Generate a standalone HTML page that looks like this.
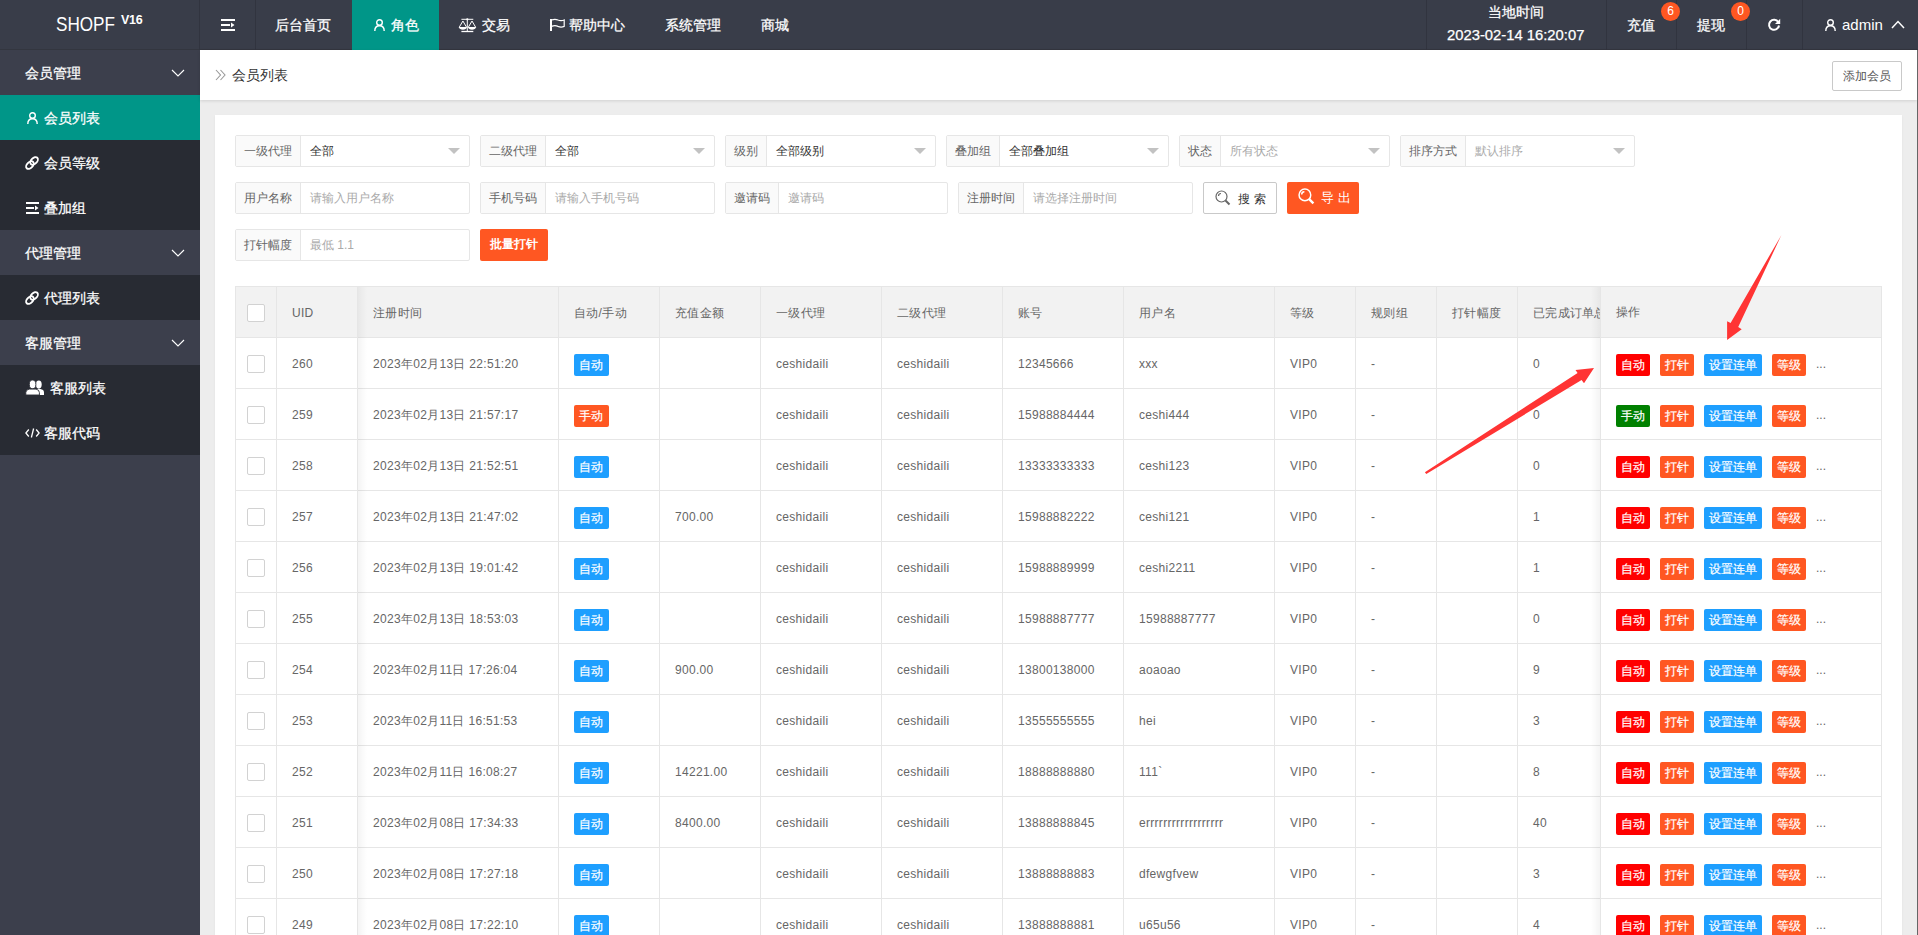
<!DOCTYPE html><html><head><meta charset="utf-8"><style>
*{box-sizing:border-box;margin:0;padding:0}
html,body{width:1918px;height:935px;overflow:hidden;background:#ededed;font-family:"Liberation Sans",sans-serif;color:#666}
.ab{position:absolute;white-space:nowrap}
.w14{color:#fff;font-size:14px;line-height:16px;-webkit-text-stroke:0.25px #fff}
.vl{position:absolute;top:0;width:1px;height:50px;background:#31343f}
.fi{position:absolute;height:32px;border:1px solid #e6e6e6;border-radius:2px;background:#fff;font-size:12px}
.fi .lb{position:absolute;left:0;top:0;height:30px;background:#fafafa;border-right:1px solid #e6e6e6;color:#666;line-height:30px;padding-left:8px;white-space:nowrap}
.fi .v{position:absolute;top:0;line-height:30px;color:#333;white-space:nowrap}
.fi .ph{color:#aaa}
.fi .arr{position:absolute;right:9px;top:12px;width:0;height:0;border-left:6px solid transparent;border-right:6px solid transparent;border-top:6px solid #c2c2c2}
.btn{position:absolute;height:32px;border-radius:2px;font-size:12px;line-height:30px;text-align:center;white-space:nowrap}
.c{position:absolute;top:0;height:50px;border-right:1px solid #e6e6e6;line-height:52px;letter-spacing:0.3px;font-size:12px;color:#666;padding-left:15px;overflow:hidden;white-space:nowrap;background:#fff}
.hd .c{background:#f2f2f2}
.row{position:absolute;left:0;height:51px;border-bottom:1px solid #e6e6e6}
.cb{position:absolute;left:11px;top:17px;width:18px;height:18px;border:1px solid #d2d2d2;border-radius:2px;background:#fff}
.bg{position:absolute;top:16px;height:22px;line-height:22px;padding:0 5px;color:#fff;font-size:12px;border-radius:2px;white-space:nowrap;-webkit-text-stroke:0.2px #fff}
</style></head><body>
<div class="ab" style="left:0;top:0;width:1918px;height:50px;background:#393D49"></div>
<div class="ab" style="left:56px;top:13px;color:#fff;font-size:20px;line-height:22px;transform:scaleX(0.856);transform-origin:0 0">SHOPF</div>
<div class="ab" style="left:121px;top:13px;color:#fff;font-size:12.5px;line-height:14px;font-weight:bold;letter-spacing:-0.3px">V16</div>
<div class="ab" style="left:0;top:49px;width:1918px;height:1px;background:#33363f"></div>
<div class="vl" style="left:199px"></div>
<div class="vl" style="left:255px"></div>
<div class="vl" style="left:1426px"></div>
<div class="vl" style="left:1606px"></div>
<div class="vl" style="left:1676px"></div>
<div class="vl" style="left:1746px"></div>
<div class="vl" style="left:1802px"></div>
<svg class="ab" style="left:221px;top:19px" width="14" height="12" viewBox="0 0 14 12"><rect x="0" y="0" width="14" height="2" fill="#fff"/><rect x="0" y="5" width="9" height="2" fill="#fff"/><path d="M10 3.5 L13.5 6 L10 8.5Z" fill="#fff"/><rect x="0" y="10" width="14" height="2" fill="#fff"/></svg>
<div class="ab" style="left:352px;top:0;width:87px;height:50px;background:#009688"></div>
<div class="ab w14" style="left:275px;top:17px">后台首页</div>
<div class="ab w14" style="left:391px;top:17px">角色</div>
<div class="ab w14" style="left:482px;top:17px">交易</div>
<div class="ab w14" style="left:569px;top:17px">帮助中心</div>
<div class="ab w14" style="left:665px;top:17px">系统管理</div>
<div class="ab w14" style="left:761px;top:17px">商城</div>
<svg class="ab" style="left:374px;top:19px" width="11" height="12" viewBox="0 0 11 12"><circle cx="5.5" cy="3.5" r="2.8" fill="none" stroke="#fff" stroke-width="1.4"/><path d="M0.8 12 C0.8 8.5 2.8 6.8 5.5 6.8 C8.2 6.8 10.2 8.5 10.2 12" fill="none" stroke="#fff" stroke-width="1.4"/></svg>
<svg class="ab" style="left:458px;top:17px" width="20" height="16" viewBox="0 0 20 16"><g fill="none" stroke="#fff" stroke-width="1"><line x1="3.4" y1="2.3" x2="15.3" y2="2.3"/><line x1="9.3" y1="2.3" x2="9.3" y2="14.5"/><line x1="3.4" y1="14.5" x2="15.3" y2="14.5" stroke-width="1.3"/><path d="M4.9 4 L1.2 10.3 M4.9 4 L8.6 10.3"/><path d="M14 4 L10.3 10.3 M14 4 L17.7 10.3"/></g><g fill="#fff"><circle cx="9.3" cy="2.3" r="1.1"/><path d="M0.8 10 L9 10 Q8.3 12.8 4.9 12.8 Q1.5 12.8 0.8 10Z"/><path d="M9.9 10 L18.1 10 Q17.4 12.8 14 12.8 Q10.6 12.8 9.9 10Z"/></g></svg>
<svg class="ab" style="left:549px;top:18px" width="17" height="14" viewBox="0 0 17 14"><g fill="none" stroke="#fff"><line x1="2" y1="1" x2="2" y2="13" stroke-width="2"/><path d="M2.5 2 Q6 0.6 9 2 Q12 3.3 15.2 2 L15.2 8.4 Q12 9.7 9 8.4 Q6 7 2.5 8.4" stroke-width="1.2"/></g></svg>
<div class="ab w14" style="left:1488px;top:4px;font-size:14px">当地时间</div>
<div class="ab w14" style="left:1447px;top:27px;font-size:14.8px;line-height:17px">2023-02-14 16:20:07</div>
<div class="ab w14" style="left:1627px;top:17px">充值</div>
<div class="ab w14" style="left:1697px;top:17px">提现</div>
<div class="ab" style="left:1661px;top:2px;width:19px;height:19px;border-radius:50%;background:#FF5722;color:#fff;font-size:12px;line-height:19px;text-align:center">6</div>
<div class="ab" style="left:1731px;top:2px;width:19px;height:19px;border-radius:50%;background:#FF5722;color:#fff;font-size:12px;line-height:19px;text-align:center">0</div>
<svg class="ab" style="left:1767px;top:18px" width="14" height="14" viewBox="0 0 14 14"><path d="M11.3 4.2 A5 5 0 1 0 12 7.5" fill="none" stroke="#fff" stroke-width="2"/><path d="M13.2 0.8 L13.2 6 L8 6 Z" fill="#fff"/></svg>
<svg class="ab" style="left:1825px;top:19px" width="11" height="12" viewBox="0 0 11 12"><circle cx="5.5" cy="3.5" r="2.8" fill="none" stroke="#fff" stroke-width="1.4"/><path d="M0.8 12 C0.8 8.5 2.8 6.8 5.5 6.8 C8.2 6.8 10.2 8.5 10.2 12" fill="none" stroke="#fff" stroke-width="1.4"/></svg>
<div class="ab" style="left:1842px;top:16px;color:#fff;font-size:15px;line-height:17px">admin</div>
<svg class="ab" style="left:1891px;top:20px" width="14" height="9" viewBox="0 0 14 9"><path d="M1 8 L7 1.5 L13 8" fill="none" stroke="#fff" stroke-width="1.5"/></svg>
<div class="ab" style="left:0;top:50px;width:200px;height:885px;background:#3C3F4C"></div>
<div class="ab" style="left:0;top:140px;width:200px;height:90px;background:#282B33"></div>
<div class="ab" style="left:0;top:275px;width:200px;height:45px;background:#282B33"></div>
<div class="ab" style="left:0;top:365px;width:200px;height:90px;background:#282B33"></div>
<div class="ab" style="left:0;top:95px;width:200px;height:45px;background:#009688"></div>
<div class="ab w14" style="left:25px;top:65px">会员管理</div>
<svg class="ab" style="left:171px;top:69px" width="14" height="8" viewBox="0 0 14 8"><path d="M1 1 L7 7 L13 1" fill="none" stroke="#fff" stroke-width="1.1"/></svg>
<div class="ab w14" style="left:25px;top:245px">代理管理</div>
<svg class="ab" style="left:171px;top:249px" width="14" height="8" viewBox="0 0 14 8"><path d="M1 1 L7 7 L13 1" fill="none" stroke="#fff" stroke-width="1.1"/></svg>
<div class="ab w14" style="left:25px;top:335px">客服管理</div>
<svg class="ab" style="left:171px;top:339px" width="14" height="8" viewBox="0 0 14 8"><path d="M1 1 L7 7 L13 1" fill="none" stroke="#fff" stroke-width="1.1"/></svg>
<div class="ab w14" style="left:44px;top:110px">会员列表</div>
<div class="ab w14" style="left:44px;top:155px">会员等级</div>
<div class="ab w14" style="left:44px;top:200px">叠加组</div>
<div class="ab w14" style="left:44px;top:290px">代理列表</div>
<div class="ab w14" style="left:50px;top:380px">客服列表</div>
<div class="ab w14" style="left:44px;top:425px">客服代码</div>
<svg class="ab" style="left:27px;top:112px" width="11" height="12" viewBox="0 0 11 12"><circle cx="5.5" cy="3.5" r="2.8" fill="none" stroke="#fff" stroke-width="1.4"/><path d="M0.8 12 C0.8 8.5 2.8 6.8 5.5 6.8 C8.2 6.8 10.2 8.5 10.2 12" fill="none" stroke="#fff" stroke-width="1.4"/></svg>
<svg class="ab" style="left:24px;top:155px" width="16" height="16" viewBox="0 0 16 16"><g fill="none" stroke="#fff" stroke-width="1.9"><ellipse cx="10.1" cy="5.9" rx="4.5" ry="2.9" transform="rotate(-45 10.1 5.9)"/><ellipse cx="5.9" cy="10.1" rx="4.5" ry="2.9" transform="rotate(-45 5.9 10.1)"/></g></svg>
<svg class="ab" style="left:24px;top:290px" width="16" height="16" viewBox="0 0 16 16"><g fill="none" stroke="#fff" stroke-width="1.9"><ellipse cx="10.1" cy="5.9" rx="4.5" ry="2.9" transform="rotate(-45 10.1 5.9)"/><ellipse cx="5.9" cy="10.1" rx="4.5" ry="2.9" transform="rotate(-45 5.9 10.1)"/></g></svg>
<svg class="ab" style="left:26px;top:202px" width="13" height="12" viewBox="0 0 13 12"><rect x="0" y="0" width="13" height="2" fill="#fff"/><rect x="0" y="5" width="8" height="2" fill="#fff"/><path d="M9 3.5 L12.5 6 L9 8.5Z" fill="#fff"/><rect x="0" y="10" width="13" height="2" fill="#fff"/></svg>
<svg class="ab" style="left:25px;top:380px" width="20" height="15" viewBox="0 0 20 15"><g fill="#fff"><ellipse cx="13.8" cy="4.6" rx="2.9" ry="4.1"/><path d="M9.5 15 L9.5 12.2 Q9.5 9.6 12.2 9.1 L15.4 9.1 Q18.8 9.6 19 12.2 L19 15Z"/><ellipse cx="7.6" cy="4.4" rx="3.3" ry="4.4" stroke="#282B33" stroke-width="0.9"/><path d="M0.8 15 L0.8 12.5 Q1 9.6 4.2 9.1 L11 9.1 Q14.2 9.6 14.4 12.5 L14.4 15Z" stroke="#282B33" stroke-width="0.9"/></g></svg>
<svg class="ab" style="left:25px;top:428px" width="15" height="10" viewBox="0 0 15 10"><g fill="none" stroke="#fff" stroke-width="1.3"><path d="M3.8 1.5 L0.9 5 L3.8 8.5"/><path d="M11.2 1.5 L14.1 5 L11.2 8.5"/><line x1="8.6" y1="0.5" x2="6.4" y2="9.5"/></g></svg>
<div class="ab" style="left:200px;top:50px;width:1717px;height:50px;background:#fff;box-shadow:0 1px 3px rgba(0,0,0,.12)"></div>
<div class="ab" style="left:1917px;top:50px;width:1px;height:885px;background:#666"></div>
<svg class="ab" style="left:215px;top:69px" width="12" height="12" viewBox="0 0 12 12"><g fill="none" stroke="#999" stroke-width="1.1"><path d="M1 1 L5.5 6 L1 11"/><path d="M5.5 1 L10 6 L5.5 11"/></g></svg>
<div class="ab" style="left:232px;top:67px;color:#333;font-size:14px;line-height:16px">会员列表</div>
<div class="btn" style="left:1832px;top:61px;width:70px;height:30px;border:1px solid #c9c9c9;color:#555;background:#fff;line-height:28px">添加会员</div>
<div class="ab" style="left:215px;top:115px;width:1687px;height:830px;background:#fff;box-shadow:0 1px 2px rgba(0,0,0,.06)"></div>
<div class="fi" style="left:235px;top:135px;width:235px"><div class="lb" style="width:65px">一级代理</div><div class="v" style="left:74px">全部</div><div class="arr"></div></div>
<div class="fi" style="left:480px;top:135px;width:235px"><div class="lb" style="width:65px">二级代理</div><div class="v" style="left:74px">全部</div><div class="arr"></div></div>
<div class="fi" style="left:725px;top:135px;width:211px"><div class="lb" style="width:41px">级别</div><div class="v" style="left:50px">全部级别</div><div class="arr"></div></div>
<div class="fi" style="left:946px;top:135px;width:223px"><div class="lb" style="width:53px">叠加组</div><div class="v" style="left:62px">全部叠加组</div><div class="arr"></div></div>
<div class="fi" style="left:1179px;top:135px;width:211px"><div class="lb" style="width:41px">状态</div><div class="v ph" style="left:50px">所有状态</div><div class="arr"></div></div>
<div class="fi" style="left:1400px;top:135px;width:235px"><div class="lb" style="width:65px">排序方式</div><div class="v ph" style="left:74px">默认排序</div><div class="arr"></div></div>
<div class="fi" style="left:235px;top:182px;width:235px"><div class="lb" style="width:65px">用户名称</div><div class="v ph" style="left:74px">请输入用户名称</div></div>
<div class="fi" style="left:480px;top:182px;width:235px"><div class="lb" style="width:65px">手机号码</div><div class="v ph" style="left:74px">请输入手机号码</div></div>
<div class="fi" style="left:725px;top:182px;width:223px"><div class="lb" style="width:53px">邀请码</div><div class="v ph" style="left:62px">邀请码</div></div>
<div class="fi" style="left:958px;top:182px;width:235px"><div class="lb" style="width:65px">注册时间</div><div class="v ph" style="left:74px">请选择注册时间</div></div>
<div class="fi" style="left:235px;top:229px;width:235px"><div class="lb" style="width:65px">打针幅度</div><div class="v ph" style="left:74px">最低 1.1</div></div>
<div class="btn" style="left:1203px;top:182px;width:74px;border:1px solid #c9c9c9;background:#fff;color:#333"></div>
<svg class="ab" style="left:1215px;top:190px" width="16" height="16" viewBox="0 0 16 16"><g fill="none" stroke="#666" stroke-width="1.2"><circle cx="6.5" cy="6.5" r="5.5"/><path d="M3.5 6 Q3.5 3.5 6 3.5"/><line x1="10.5" y1="10.5" x2="14.5" y2="14.5" stroke-width="2"/></g></svg>
<div class="ab" style="left:1238px;top:191px;font-size:12px;line-height:16px;color:#333;letter-spacing:4px">搜索</div>
<div class="btn" style="left:1287px;top:182px;width:72px;background:#FF5722;color:#fff"></div>
<svg class="ab" style="left:1298px;top:188px" width="17" height="17" viewBox="0 0 16 16"><g fill="none" stroke="#fff" stroke-width="1.4"><circle cx="6.5" cy="6.5" r="5.5"/><path d="M3.5 6 Q3.5 3.5 6 3.5"/><line x1="10.5" y1="10.5" x2="14.5" y2="14.5" stroke-width="2.2"/></g></svg>
<div class="ab" style="left:1321px;top:190px;font-size:13px;line-height:16px;color:#fff;letter-spacing:4px">导出</div>
<div class="btn" style="left:480px;top:229px;width:68px;background:#FF5722;color:#fff;font-weight:bold">批量打针</div>
<div class="ab" style="left:235px;top:286px;width:1647px;height:649px;border-top:1px solid #e6e6e6;border-left:1px solid #e6e6e6;border-right:1px solid #e6e6e6;overflow:hidden;background:#fff">
<div class="row hd" style="top:0px;width:1645px"><div class="c" style="left:0px;width:41px"><div class="cb"></div></div><div class="c" style="left:41px;width:81px">UID</div><div class="c" style="left:122px;width:201px">注册时间</div><div class="c" style="left:323px;width:101px">自动/手动</div><div class="c" style="left:424px;width:101px">充值金额</div><div class="c" style="left:525px;width:121px">一级代理</div><div class="c" style="left:646px;width:121px">二级代理</div><div class="c" style="left:767px;width:121px">账号</div><div class="c" style="left:888px;width:151px">用户名</div><div class="c" style="left:1039px;width:81px">等级</div><div class="c" style="left:1120px;width:81px">规则组</div><div class="c" style="left:1201px;width:81px">打针幅度</div><div class="c" style="left:1282px;width:123px">已完成订单总数</div></div>
<div class="row" style="top:51px;width:1645px"><div class="c" style="left:0px;width:41px"><div class="cb"></div></div><div class="c" style="left:41px;width:81px">260</div><div class="c" style="left:122px;width:201px">2023年02月13日 22:51:20</div><div class="c" style="left:323px;width:101px"><span class="bg" style="left:15px;background:#1E9FFF">自动</span></div><div class="c" style="left:424px;width:101px"></div><div class="c" style="left:525px;width:121px">ceshidaili</div><div class="c" style="left:646px;width:121px">ceshidaili</div><div class="c" style="left:767px;width:121px">12345666</div><div class="c" style="left:888px;width:151px">xxx</div><div class="c" style="left:1039px;width:81px">VIP0</div><div class="c" style="left:1120px;width:81px">-</div><div class="c" style="left:1201px;width:81px"></div><div class="c" style="left:1282px;width:123px">0</div></div>
<div class="row" style="top:102px;width:1645px"><div class="c" style="left:0px;width:41px"><div class="cb"></div></div><div class="c" style="left:41px;width:81px">259</div><div class="c" style="left:122px;width:201px">2023年02月13日 21:57:17</div><div class="c" style="left:323px;width:101px"><span class="bg" style="left:15px;background:#FF5722">手动</span></div><div class="c" style="left:424px;width:101px"></div><div class="c" style="left:525px;width:121px">ceshidaili</div><div class="c" style="left:646px;width:121px">ceshidaili</div><div class="c" style="left:767px;width:121px">15988884444</div><div class="c" style="left:888px;width:151px">ceshi444</div><div class="c" style="left:1039px;width:81px">VIP0</div><div class="c" style="left:1120px;width:81px">-</div><div class="c" style="left:1201px;width:81px"></div><div class="c" style="left:1282px;width:123px">0</div></div>
<div class="row" style="top:153px;width:1645px"><div class="c" style="left:0px;width:41px"><div class="cb"></div></div><div class="c" style="left:41px;width:81px">258</div><div class="c" style="left:122px;width:201px">2023年02月13日 21:52:51</div><div class="c" style="left:323px;width:101px"><span class="bg" style="left:15px;background:#1E9FFF">自动</span></div><div class="c" style="left:424px;width:101px"></div><div class="c" style="left:525px;width:121px">ceshidaili</div><div class="c" style="left:646px;width:121px">ceshidaili</div><div class="c" style="left:767px;width:121px">13333333333</div><div class="c" style="left:888px;width:151px">ceshi123</div><div class="c" style="left:1039px;width:81px">VIP0</div><div class="c" style="left:1120px;width:81px">-</div><div class="c" style="left:1201px;width:81px"></div><div class="c" style="left:1282px;width:123px">0</div></div>
<div class="row" style="top:204px;width:1645px"><div class="c" style="left:0px;width:41px"><div class="cb"></div></div><div class="c" style="left:41px;width:81px">257</div><div class="c" style="left:122px;width:201px">2023年02月13日 21:47:02</div><div class="c" style="left:323px;width:101px"><span class="bg" style="left:15px;background:#1E9FFF">自动</span></div><div class="c" style="left:424px;width:101px">700.00</div><div class="c" style="left:525px;width:121px">ceshidaili</div><div class="c" style="left:646px;width:121px">ceshidaili</div><div class="c" style="left:767px;width:121px">15988882222</div><div class="c" style="left:888px;width:151px">ceshi121</div><div class="c" style="left:1039px;width:81px">VIP0</div><div class="c" style="left:1120px;width:81px">-</div><div class="c" style="left:1201px;width:81px"></div><div class="c" style="left:1282px;width:123px">1</div></div>
<div class="row" style="top:255px;width:1645px"><div class="c" style="left:0px;width:41px"><div class="cb"></div></div><div class="c" style="left:41px;width:81px">256</div><div class="c" style="left:122px;width:201px">2023年02月13日 19:01:42</div><div class="c" style="left:323px;width:101px"><span class="bg" style="left:15px;background:#1E9FFF">自动</span></div><div class="c" style="left:424px;width:101px"></div><div class="c" style="left:525px;width:121px">ceshidaili</div><div class="c" style="left:646px;width:121px">ceshidaili</div><div class="c" style="left:767px;width:121px">15988889999</div><div class="c" style="left:888px;width:151px">ceshi2211</div><div class="c" style="left:1039px;width:81px">VIP0</div><div class="c" style="left:1120px;width:81px">-</div><div class="c" style="left:1201px;width:81px"></div><div class="c" style="left:1282px;width:123px">1</div></div>
<div class="row" style="top:306px;width:1645px"><div class="c" style="left:0px;width:41px"><div class="cb"></div></div><div class="c" style="left:41px;width:81px">255</div><div class="c" style="left:122px;width:201px">2023年02月13日 18:53:03</div><div class="c" style="left:323px;width:101px"><span class="bg" style="left:15px;background:#1E9FFF">自动</span></div><div class="c" style="left:424px;width:101px"></div><div class="c" style="left:525px;width:121px">ceshidaili</div><div class="c" style="left:646px;width:121px">ceshidaili</div><div class="c" style="left:767px;width:121px">15988887777</div><div class="c" style="left:888px;width:151px">15988887777</div><div class="c" style="left:1039px;width:81px">VIP0</div><div class="c" style="left:1120px;width:81px">-</div><div class="c" style="left:1201px;width:81px"></div><div class="c" style="left:1282px;width:123px">0</div></div>
<div class="row" style="top:357px;width:1645px"><div class="c" style="left:0px;width:41px"><div class="cb"></div></div><div class="c" style="left:41px;width:81px">254</div><div class="c" style="left:122px;width:201px">2023年02月11日 17:26:04</div><div class="c" style="left:323px;width:101px"><span class="bg" style="left:15px;background:#1E9FFF">自动</span></div><div class="c" style="left:424px;width:101px">900.00</div><div class="c" style="left:525px;width:121px">ceshidaili</div><div class="c" style="left:646px;width:121px">ceshidaili</div><div class="c" style="left:767px;width:121px">13800138000</div><div class="c" style="left:888px;width:151px">aoaoao</div><div class="c" style="left:1039px;width:81px">VIP0</div><div class="c" style="left:1120px;width:81px">-</div><div class="c" style="left:1201px;width:81px"></div><div class="c" style="left:1282px;width:123px">9</div></div>
<div class="row" style="top:408px;width:1645px"><div class="c" style="left:0px;width:41px"><div class="cb"></div></div><div class="c" style="left:41px;width:81px">253</div><div class="c" style="left:122px;width:201px">2023年02月11日 16:51:53</div><div class="c" style="left:323px;width:101px"><span class="bg" style="left:15px;background:#1E9FFF">自动</span></div><div class="c" style="left:424px;width:101px"></div><div class="c" style="left:525px;width:121px">ceshidaili</div><div class="c" style="left:646px;width:121px">ceshidaili</div><div class="c" style="left:767px;width:121px">13555555555</div><div class="c" style="left:888px;width:151px">hei</div><div class="c" style="left:1039px;width:81px">VIP0</div><div class="c" style="left:1120px;width:81px">-</div><div class="c" style="left:1201px;width:81px"></div><div class="c" style="left:1282px;width:123px">3</div></div>
<div class="row" style="top:459px;width:1645px"><div class="c" style="left:0px;width:41px"><div class="cb"></div></div><div class="c" style="left:41px;width:81px">252</div><div class="c" style="left:122px;width:201px">2023年02月11日 16:08:27</div><div class="c" style="left:323px;width:101px"><span class="bg" style="left:15px;background:#1E9FFF">自动</span></div><div class="c" style="left:424px;width:101px">14221.00</div><div class="c" style="left:525px;width:121px">ceshidaili</div><div class="c" style="left:646px;width:121px">ceshidaili</div><div class="c" style="left:767px;width:121px">18888888880</div><div class="c" style="left:888px;width:151px">111`</div><div class="c" style="left:1039px;width:81px">VIP0</div><div class="c" style="left:1120px;width:81px">-</div><div class="c" style="left:1201px;width:81px"></div><div class="c" style="left:1282px;width:123px">8</div></div>
<div class="row" style="top:510px;width:1645px"><div class="c" style="left:0px;width:41px"><div class="cb"></div></div><div class="c" style="left:41px;width:81px">251</div><div class="c" style="left:122px;width:201px">2023年02月08日 17:34:33</div><div class="c" style="left:323px;width:101px"><span class="bg" style="left:15px;background:#1E9FFF">自动</span></div><div class="c" style="left:424px;width:101px">8400.00</div><div class="c" style="left:525px;width:121px">ceshidaili</div><div class="c" style="left:646px;width:121px">ceshidaili</div><div class="c" style="left:767px;width:121px">13888888845</div><div class="c" style="left:888px;width:151px">errrrrrrrrrrrrrrrrr</div><div class="c" style="left:1039px;width:81px">VIP0</div><div class="c" style="left:1120px;width:81px">-</div><div class="c" style="left:1201px;width:81px"></div><div class="c" style="left:1282px;width:123px">40</div></div>
<div class="row" style="top:561px;width:1645px"><div class="c" style="left:0px;width:41px"><div class="cb"></div></div><div class="c" style="left:41px;width:81px">250</div><div class="c" style="left:122px;width:201px">2023年02月08日 17:27:18</div><div class="c" style="left:323px;width:101px"><span class="bg" style="left:15px;background:#1E9FFF">自动</span></div><div class="c" style="left:424px;width:101px"></div><div class="c" style="left:525px;width:121px">ceshidaili</div><div class="c" style="left:646px;width:121px">ceshidaili</div><div class="c" style="left:767px;width:121px">13888888883</div><div class="c" style="left:888px;width:151px">dfewgfvew</div><div class="c" style="left:1039px;width:81px">VIP0</div><div class="c" style="left:1120px;width:81px">-</div><div class="c" style="left:1201px;width:81px"></div><div class="c" style="left:1282px;width:123px">3</div></div>
<div class="row" style="top:612px;width:1645px"><div class="c" style="left:0px;width:41px"><div class="cb"></div></div><div class="c" style="left:41px;width:81px">249</div><div class="c" style="left:122px;width:201px">2023年02月08日 17:22:10</div><div class="c" style="left:323px;width:101px"><span class="bg" style="left:15px;background:#1E9FFF">自动</span></div><div class="c" style="left:424px;width:101px"></div><div class="c" style="left:525px;width:121px">ceshidaili</div><div class="c" style="left:646px;width:121px">ceshidaili</div><div class="c" style="left:767px;width:121px">13888888881</div><div class="c" style="left:888px;width:151px">u65u56</div><div class="c" style="left:1039px;width:81px">VIP0</div><div class="c" style="left:1120px;width:81px">-</div><div class="c" style="left:1201px;width:81px"></div><div class="c" style="left:1282px;width:123px">4</div></div>
</div>
<div class="ab" style="left:1600px;top:287px;width:282px;height:649px;border-left:1px solid #e6e6e6;border-right:1px solid #e6e6e6;background:#fff">
<div class="ab" style="left:0;top:0;width:280px;height:51px;background:#f2f2f2;border-bottom:1px solid #e6e6e6"><span class="ab" style="left:15px;top:0;line-height:50px;font-size:12px;color:#666">操作</span></div>
<div class="ab" style="left:0;top:51px;width:280px;height:51px;border-bottom:1px solid #e6e6e6"><span class="bg" style="left:15px;background:#FF0000">自动</span><span class="bg" style="left:59px;background:#FF5722">打针</span><span class="bg" style="left:103px;background:#1E9FFF">设置连单</span><span class="bg" style="left:171px;background:#FF5722">等级</span><span class="ab" style="left:215px;top:15px;line-height:22px;font-size:12px;color:#666">...</span></div>
<div class="ab" style="left:0;top:102px;width:280px;height:51px;border-bottom:1px solid #e6e6e6"><span class="bg" style="left:15px;background:#008000">手动</span><span class="bg" style="left:59px;background:#FF5722">打针</span><span class="bg" style="left:103px;background:#1E9FFF">设置连单</span><span class="bg" style="left:171px;background:#FF5722">等级</span><span class="ab" style="left:215px;top:15px;line-height:22px;font-size:12px;color:#666">...</span></div>
<div class="ab" style="left:0;top:153px;width:280px;height:51px;border-bottom:1px solid #e6e6e6"><span class="bg" style="left:15px;background:#FF0000">自动</span><span class="bg" style="left:59px;background:#FF5722">打针</span><span class="bg" style="left:103px;background:#1E9FFF">设置连单</span><span class="bg" style="left:171px;background:#FF5722">等级</span><span class="ab" style="left:215px;top:15px;line-height:22px;font-size:12px;color:#666">...</span></div>
<div class="ab" style="left:0;top:204px;width:280px;height:51px;border-bottom:1px solid #e6e6e6"><span class="bg" style="left:15px;background:#FF0000">自动</span><span class="bg" style="left:59px;background:#FF5722">打针</span><span class="bg" style="left:103px;background:#1E9FFF">设置连单</span><span class="bg" style="left:171px;background:#FF5722">等级</span><span class="ab" style="left:215px;top:15px;line-height:22px;font-size:12px;color:#666">...</span></div>
<div class="ab" style="left:0;top:255px;width:280px;height:51px;border-bottom:1px solid #e6e6e6"><span class="bg" style="left:15px;background:#FF0000">自动</span><span class="bg" style="left:59px;background:#FF5722">打针</span><span class="bg" style="left:103px;background:#1E9FFF">设置连单</span><span class="bg" style="left:171px;background:#FF5722">等级</span><span class="ab" style="left:215px;top:15px;line-height:22px;font-size:12px;color:#666">...</span></div>
<div class="ab" style="left:0;top:306px;width:280px;height:51px;border-bottom:1px solid #e6e6e6"><span class="bg" style="left:15px;background:#FF0000">自动</span><span class="bg" style="left:59px;background:#FF5722">打针</span><span class="bg" style="left:103px;background:#1E9FFF">设置连单</span><span class="bg" style="left:171px;background:#FF5722">等级</span><span class="ab" style="left:215px;top:15px;line-height:22px;font-size:12px;color:#666">...</span></div>
<div class="ab" style="left:0;top:357px;width:280px;height:51px;border-bottom:1px solid #e6e6e6"><span class="bg" style="left:15px;background:#FF0000">自动</span><span class="bg" style="left:59px;background:#FF5722">打针</span><span class="bg" style="left:103px;background:#1E9FFF">设置连单</span><span class="bg" style="left:171px;background:#FF5722">等级</span><span class="ab" style="left:215px;top:15px;line-height:22px;font-size:12px;color:#666">...</span></div>
<div class="ab" style="left:0;top:408px;width:280px;height:51px;border-bottom:1px solid #e6e6e6"><span class="bg" style="left:15px;background:#FF0000">自动</span><span class="bg" style="left:59px;background:#FF5722">打针</span><span class="bg" style="left:103px;background:#1E9FFF">设置连单</span><span class="bg" style="left:171px;background:#FF5722">等级</span><span class="ab" style="left:215px;top:15px;line-height:22px;font-size:12px;color:#666">...</span></div>
<div class="ab" style="left:0;top:459px;width:280px;height:51px;border-bottom:1px solid #e6e6e6"><span class="bg" style="left:15px;background:#FF0000">自动</span><span class="bg" style="left:59px;background:#FF5722">打针</span><span class="bg" style="left:103px;background:#1E9FFF">设置连单</span><span class="bg" style="left:171px;background:#FF5722">等级</span><span class="ab" style="left:215px;top:15px;line-height:22px;font-size:12px;color:#666">...</span></div>
<div class="ab" style="left:0;top:510px;width:280px;height:51px;border-bottom:1px solid #e6e6e6"><span class="bg" style="left:15px;background:#FF0000">自动</span><span class="bg" style="left:59px;background:#FF5722">打针</span><span class="bg" style="left:103px;background:#1E9FFF">设置连单</span><span class="bg" style="left:171px;background:#FF5722">等级</span><span class="ab" style="left:215px;top:15px;line-height:22px;font-size:12px;color:#666">...</span></div>
<div class="ab" style="left:0;top:561px;width:280px;height:51px;border-bottom:1px solid #e6e6e6"><span class="bg" style="left:15px;background:#FF0000">自动</span><span class="bg" style="left:59px;background:#FF5722">打针</span><span class="bg" style="left:103px;background:#1E9FFF">设置连单</span><span class="bg" style="left:171px;background:#FF5722">等级</span><span class="ab" style="left:215px;top:15px;line-height:22px;font-size:12px;color:#666">...</span></div>
<div class="ab" style="left:0;top:612px;width:280px;height:51px;border-bottom:1px solid #e6e6e6"><span class="bg" style="left:15px;background:#FF0000">自动</span><span class="bg" style="left:59px;background:#FF5722">打针</span><span class="bg" style="left:103px;background:#1E9FFF">设置连单</span><span class="bg" style="left:171px;background:#FF5722">等级</span><span class="ab" style="left:215px;top:15px;line-height:22px;font-size:12px;color:#666">...</span></div>
</div>
<div class="ab" style="left:1591px;top:287px;width:9px;height:649px;background:linear-gradient(to left,rgba(0,0,0,.045),rgba(0,0,0,0))"></div>
<div class="ab" style="left:358px;top:287px;width:9px;height:649px;background:linear-gradient(to right,rgba(0,0,0,.045),rgba(0,0,0,0))"></div>
<svg class="ab" style="left:0;top:0" width="1918" height="935" viewBox="0 0 1918 935"><path d="M1424.9 472.3 L1426.3 474 L1581.6 380 L1584 383.3 L1594 368 L1575.5 370 L1577.6 372.9 Z" fill="#FF3434"/><path d="M1781.4 235 L1738.2 327.1 L1741.7 329.2 L1727.1 339.9 L1727.1 321.3 L1730.6 322.9 Z" fill="#FF3434"/></svg>
</body></html>
